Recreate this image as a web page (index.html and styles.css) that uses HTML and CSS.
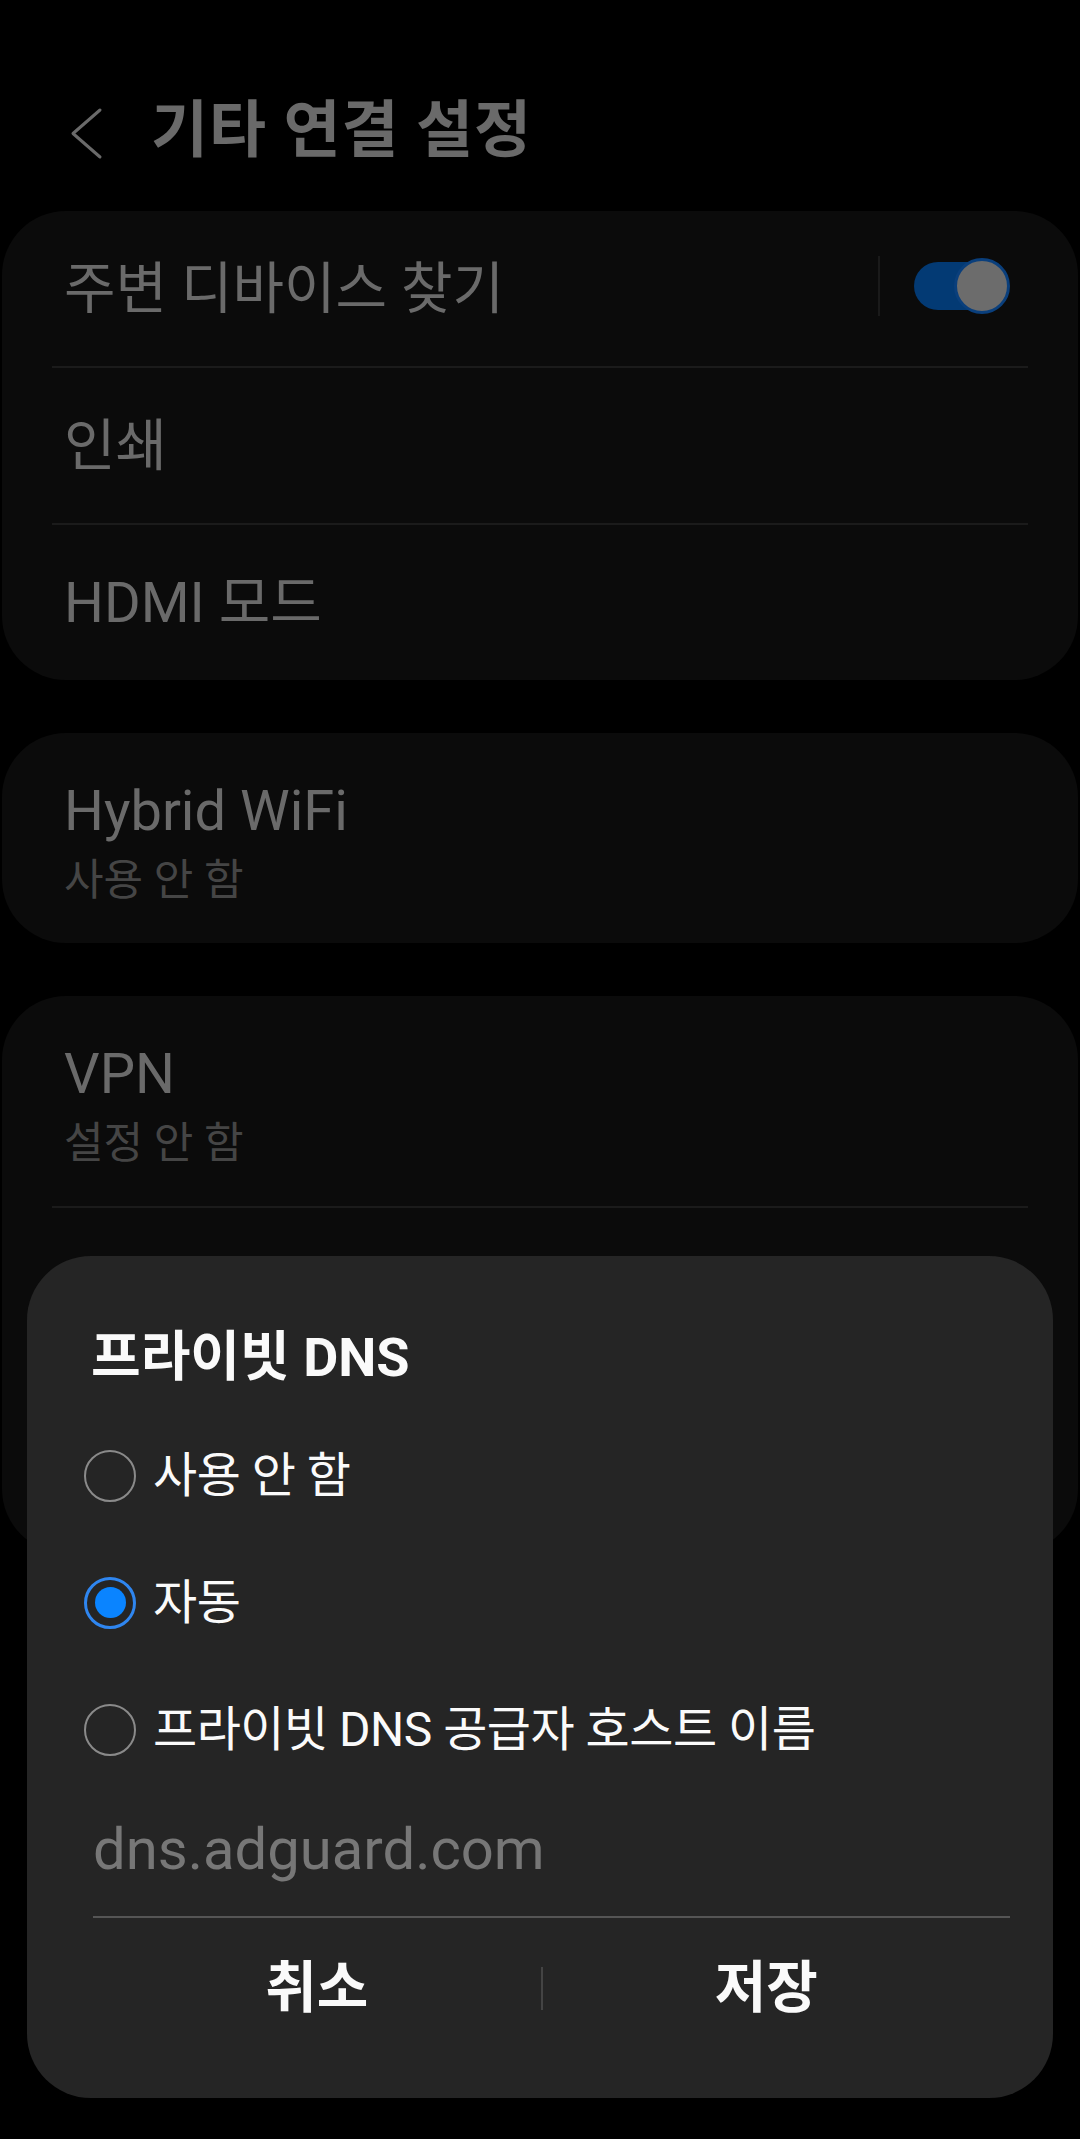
FILE: index.html
```html
<!DOCTYPE html>
<html lang="ko">
<head>
<meta charset="utf-8">
<title>기타 연결 설정</title>
<link rel="stylesheet" href="styles.css">
</head>
<body>
<div class="screen">
  <header class="appbar">
    <svg class="back" width="40" height="60" viewBox="0 0 40 60" aria-hidden="true">
      <polyline points="32,10 5,33.5 32,57" fill="none" stroke="#6a6a6a" stroke-width="3" stroke-linecap="round" stroke-linejoin="round"/>
    </svg>
    <h1 class="title">기타 연결 설정</h1>
  </header>

  <section class="card">
    <div class="row">
      <span class="row-title">주변 디바이스 찾기</span>
      <div class="switch-area">
        <span class="vline"></span>
        <span class="switch"><span class="track"></span><span class="thumb"></span></span>
      </div>
    </div>
    <div class="divider"></div>
    <div class="row"><span class="row-title">인쇄</span></div>
    <div class="divider"></div>
    <div class="row"><span class="row-title">HDMI 모드</span></div>
  </section>

  <section class="card">
    <div class="row row-two">
      <span class="row-title">Hybrid WiFi</span>
      <span class="row-sub">사용 안 함</span>
    </div>
  </section>

  <section class="card card-last">
    <div class="row row-two">
      <span class="row-title">VPN</span>
      <span class="row-sub">설정 안 함</span>
    </div>
    <div class="divider"></div>
  </section>
</div>

<div class="dialog" role="dialog">
  <h2 class="dlg-title">프라이빗 DNS</h2>
  <div class="options">
    <label class="option"><span class="radio"></span><span class="opt-text">사용 안 함</span></label>
    <label class="option"><span class="radio radio-on"><span class="dot"></span></span><span class="opt-text">자동</span></label>
    <label class="option"><span class="radio"></span><span class="opt-text">프라이빗 DNS 공급자 호스트 이름</span></label>
  </div>
  <div class="field">dns.adguard.com</div>
  <div class="actions">
    <span class="btn">취소</span>
    <span class="btn-sep"></span>
    <span class="btn">저장</span>
  </div>
</div>
</body>
</html>
```
FILE: styles.css
```css
* { box-sizing: border-box; }

html, body {
  margin: 0;
  padding: 0;
  background: #000;
}

body {
  width: 1080px;
  height: 2139px;
  position: relative;
  overflow: hidden;
  font-family: Roboto, "Noto Sans CJK KR", sans-serif;
  color: #6b6b6b;
}

.appbar {
  height: 211px;
  padding: 51px 0 0 68px;
  display: flex;
  align-items: center;
}

.back {
  display: block;
  margin-top: -3px;
}

.title {
  margin: 0 0 0 43px;
  font-size: 62px;
  line-height: 70px;
  font-weight: 700;
  letter-spacing: 1px;
  color: #6a6a6a;
}

.card {
  margin: 0 2px 53px;
  background: #0b0b0b;
  border-radius: 64px;
  overflow: hidden;
}

.card-last {
  min-height: 557px;
}

.row {
  height: 155px;
  padding: 0 68px 0 62px;
  display: flex;
  align-items: center;
  justify-content: space-between;
}

.row-two {
  height: 210px;
  flex-direction: column;
  align-items: flex-start;
  justify-content: flex-start;
  padding-top: 48px;
}

.row-title {
  font-size: 56px;
  line-height: 60px;
  color: #6a6a6a;
  white-space: nowrap;
}

.row-sub {
  margin-top: 14px;
  font-size: 43px;
  line-height: 50px;
  color: #454545;
}

.divider {
  height: 2px;
  margin: 0 50px;
  background: #1b1b1b;
}

.switch-area {
  display: flex;
  align-items: center;
  margin-top: -6px;
}

.vline {
  width: 2px;
  height: 60px;
  background: #1a1a1a;
  margin-right: 34px;
}

.switch {
  display: flex;
  align-items: center;
}

.track {
  width: 86px;
  height: 48px;
  border-radius: 24px;
  background: #033a74;
}

.thumb {
  width: 56px;
  height: 56px;
  margin-left: -46px;
  border-radius: 50%;
  border: 3px solid #0a3f7c;
  background: #6c6c6c;
}

/* dialog */
.dialog {
  position: absolute;
  left: 27px;
  top: 1256px;
  width: 1026px;
  height: 842px;
  background: #252525;
  border-radius: 64px;
  padding-top: 72px;
  color: #fafafa;
}

.dlg-title {
  margin: 0 0 0 64px;
  font-size: 54px;
  line-height: 60px;
  font-weight: 700;
  color: #fafafa;
}

.options {
  margin-top: 24px;
}

.option {
  height: 127px;
  display: flex;
  align-items: center;
  padding-left: 57px;
}

.radio {
  width: 52px;
  height: 52px;
  border-radius: 50%;
  border: 2.5px solid #8a8a8a;
  display: flex;
  align-items: center;
  justify-content: center;
  flex: none;
}

.radio-on {
  border: 3px solid #2f86f0;
}

.dot {
  width: 31px;
  height: 31px;
  border-radius: 50%;
  background: #0a84ff;
}

.opt-text {
  margin-left: 17px;
  font-size: 48px;
  line-height: 60px;
  letter-spacing: -0.5px;
  color: #fafafa;
  white-space: nowrap;
}

.field {
  margin: 21px 43px 0 66px;
  padding-bottom: 32px;
  font-size: 58px;
  line-height: 70px;
  color: #777;
  border-bottom: 2px solid #555;
}

.actions {
  margin: 30px 63px 0 66px;
  height: 80px;
  display: flex;
  align-items: center;
}

.btn {
  flex: 1;
  text-align: center;
  font-size: 56px;
  line-height: 80px;
  font-weight: 700;
  color: #fafafa;
}

.btn-sep {
  width: 2px;
  height: 43px;
  background: #444;
}
```
